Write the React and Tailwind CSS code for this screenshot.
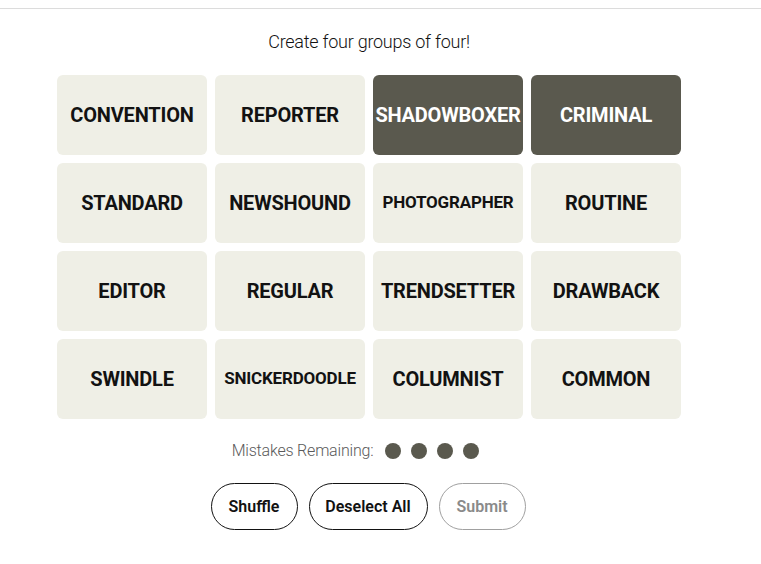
const words = [
  { w: "CONVENTION" },
  { w: "REPORTER" },
  { w: "SHADOWBOXER", sel: true },
  { w: "CRIMINAL", sel: true },
  { w: "STANDARD" },
  { w: "NEWSHOUND" },
  { w: "PHOTOGRAPHER", small: true },
  { w: "ROUTINE" },
  { w: "EDITOR" },
  { w: "REGULAR" },
  { w: "TRENDSETTER" },
  { w: "DRAWBACK" },
  { w: "SWINDLE" },
  { w: "SNICKERDOODLE", small: true },
  { w: "COLUMNIST" },
  { w: "COMMON" },
];

function Tile({ item }) {
  return (
    <button
      className={
        "h-[80px] w-[150px] rounded-md flex items-center justify-center font-bold uppercase tracking-[-0.2px] " +
        (item.sel ? "bg-[#5a594e] text-white " : "bg-[#efefe6] text-[#121212] ") +
        (item.small ? "text-[17px]" : "text-[20px]")
      }
    >
      {item.w}
    </button>
  );
}

export default function App() {
  return (
    <div className="min-h-[564px] bg-white font-['Roboto',sans-serif]">
      <div className="h-[9px] border-b border-[#dcdcdc]"></div>
      <div className="w-[738px] flex flex-col items-center">
        <p className="mt-[22px] text-[18px] leading-[22px] text-[#121212] font-light tracking-[-0.25px]">
          Create four groups of four!
        </p>
        <div className="mt-[22px] grid grid-cols-4 gap-2">
          {words.map((item) => (
            <Tile key={item.w} item={item} />
          ))}
        </div>
        <div className="mt-[20px] mr-[27px] flex items-center text-[16px] text-[#5a5a5a]">
          <span className="font-light tracking-[-0.2px]">Mistakes Remaining:</span>
          <div className="ml-[12px] flex gap-[10px]">
            <span className="h-4 w-4 rounded-full bg-[#5a594e]"></span>
            <span className="h-4 w-4 rounded-full bg-[#5a594e]"></span>
            <span className="h-4 w-4 rounded-full bg-[#5a594e]"></span>
            <span className="h-4 w-4 rounded-full bg-[#5a594e]"></span>
          </div>
        </div>
        <div className="mt-[20px] mr-[2px] flex gap-[11px]">
          <button className="h-[47px] w-[87px] rounded-full border border-[#121212] text-[16px] font-semibold text-[#121212]">
            Shuffle
          </button>
          <button className="h-[47px] w-[119px] rounded-full border border-[#121212] text-[16px] font-semibold text-[#121212]">
            Deselect All
          </button>
          <button className="h-[47px] w-[87px] rounded-full border border-[#a0a0a0] text-[16px] font-semibold text-[#8a8a8a]">
            Submit
          </button>
        </div>
      </div>
    </div>
  );
}
